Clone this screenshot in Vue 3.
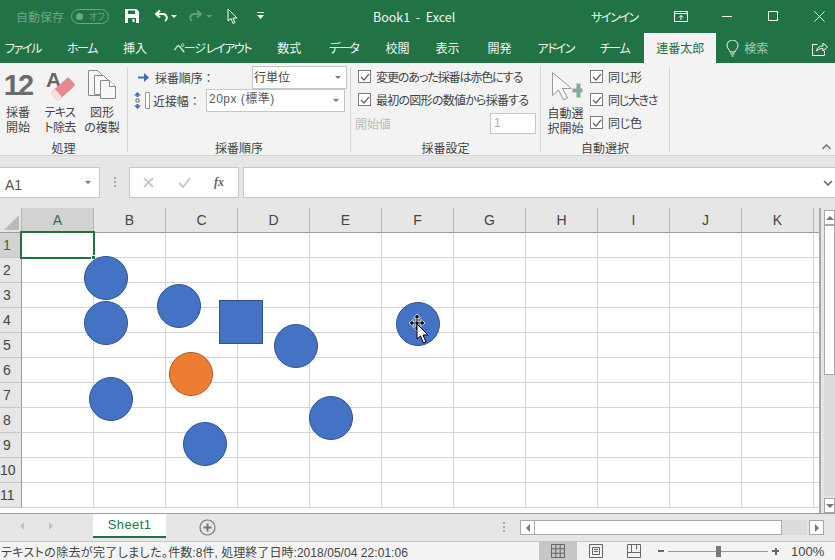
<template>
  <div class="excel">
    <!-- タイトルバー -->
    <header class="titlebar">
      <span class="autosave">自動保存</span>
      <span class="toggle"><i></i><em>オフ</em></span>
      <svg class="qat-save" width="16" height="16" viewBox="0 0 16 16">
        <path d="M1 1h11.500L15 3.500V15H1z" fill="#fff" />
        <path d="M4 2.500h7V6H4zM4 10h8v5H4z" fill="#217346" />
        <path d="M8.500 11h2v3h-2z" fill="#fff" />
      </svg>
      <svg class="qat-undo" width="14" height="14" viewBox="0 0 14 14" fill="none" stroke="#fff" stroke-width="2">
        <path d="M6 1.500 2 5l4 3.500" />
        <path d="M2.500 5H9a3.800 3.800 0 0 1 2 7" />
      </svg>
      <span class="caret qat-c1"></span>
      <svg class="qat-redo" width="14" height="14" viewBox="0 0 14 14" fill="none" stroke="#5f9f80" stroke-width="2">
        <path d="M8 1.500 12 5 8 8.500" />
        <path d="M11.500 5H5a3.800 3.800 0 0 0-2 7" />
      </svg>
      <span class="caret dim qat-c2"></span>
      <svg class="qat-cursor" width="11" height="17" viewBox="0 0 11 17">
        <path d="M1 1v12l3-2.500L6 15.500l2-1-2-4.500h4z" fill="#217346" stroke="#fff" />
      </svg>
      <svg class="qat-more" width="7" height="8" viewBox="0 0 7 8">
        <path d="M0 0h7v1H0zM0 3h7L3.500 7z" fill="#fff" />
      </svg>
      <span class="doc-title">Book1&nbsp; -&nbsp; Excel</span>
      <span class="signin">サインイン</span>
      <svg class="win-display" width="14" height="11" viewBox="0 0 14 11" fill="none" stroke="#fff">
        <path d="M.5.500h13v10H.5zM.5 2.500h13" />
        <path d="M7 9V4.500M5 6.500l2-2 2 2" />
      </svg>
      <span class="win-min"></span>
      <span class="win-max"></span>
      <svg class="win-close" width="11" height="11" viewBox="0 0 11 11" stroke="#fff" fill="none">
        <path d="M.5.500l10 10M10.500.500l-10 10" />
      </svg>
    </header>

    <!-- タブ -->
    <nav class="tabs">
      <span
        v-for="t in tabs"
        :key="t.name"
        class="tab"
        :class="{ active: t.name === '連番太郎', kana: t.kana }"
      >{{ t.name }}</span>
      <svg class="bulb" width="13" height="17" viewBox="0 0 13 17" fill="none" stroke="#fff">
        <path d="M4 12c0-2-3-3.500-3-6.500a5.500 5.500 0 0 1 11 0C12 8.500 9 10 9 12zM4.500 14h4M5.500 16h2" />
      </svg>
      <span class="search">検索</span>
      <svg class="share" width="16" height="15" viewBox="0 0 16 15" fill="none" stroke="#fff">
        <path d="M5.500 3.500H.5v11h12V10" />
        <path d="M4.500 10c.5-3.500 3-5 6.500-5V2l4.500 4-4.500 4V7.500c-2.500 0-5 .5-6.500 2.500z" />
      </svg>
    </nav>

    <!-- リボン -->
    <section class="ribbon">
      <div class="group g-proc">
        <div class="group-body big-row">
          <div class="big-btn b1">
            <span class="num12">12</span>
            <span class="big-label">採番<br />開始</span>
          </div>
          <div class="big-btn b2">
            <svg width="30" height="30" viewBox="0 0 30 30">
              <text x="1" y="17" class="icon-a">A</text>
              <rect x="6" y="13.500" width="24" height="11" rx="2" transform="rotate(-42 18 19)" fill="#e58a8f" />
              <rect x="6" y="13.500" width="6" height="11" rx="1.500" transform="rotate(-42 18 19)" fill="#f6dfe0" />
            </svg>
            <span class="big-label tight">テキス<br />ト除去</span>
          </div>
          <div class="big-btn b3">
            <svg width="30" height="30" viewBox="0 0 30 30" fill="#f8f8f8" stroke="#8a8a8a">
              <path d="M.5.500h9l5 5v20h-14z" />
              <path d="M6.500 5.500h9l5 5v14h-14z" />
              <path d="M12.500 10.500h9l6 6v12h-15z" />
              <path d="M21.500 10.500v6h6" />
            </svg>
            <span class="big-label">図形<br />の複製</span>
          </div>
        </div>
        <div class="group-name">処理</div>
      </div>

      <div class="group g-order">
        <div class="group-body order-body">
          <div class="order-row first">
            <svg class="arrow" width="11" height="9" viewBox="0 0 11 9">
              <path d="M0 3.500h6V0l5 4.500L6 9V5.500H0z" fill="#3f6fb5" />
            </svg>
            <span class="order-label">採番順序：</span>
            <div class="select sel-a">行単位<span class="caret-gray"></span></div>
          </div>
          <div class="order-row">
            <svg class="gap-icon" width="16" height="17" viewBox="0 0 16 17">
              <path d="M3.500 0 0 3.500h2.500V5h2V3.500H7zM3.500 17 7 13.500H4.500V12h-2v1.500H0z" fill="#3f6fb5" />
              <path d="M2 7h3v3H2z" fill="none" stroke="#777" />
              <path d="M11.500.5h4v16h-4z" fill="#fff" stroke="#999" />
            </svg>
            <span class="order-label short">近接幅：</span>
            <div class="select sel-b">20px (標準)<span class="caret-gray"></span></div>
          </div>
        </div>
        <div class="group-name">採番順序</div>
      </div>

      <div class="group g-setting">
        <div class="group-body setting-body">
          <label class="check squeeze"><span class="box"><svg width="10" height="10" viewBox="0 0 10 10"><path d="M1 5l3 3 5-6" fill="none" stroke="#666" stroke-width="1.300" /></svg></span>変更のあった採番は赤色にする</label>
          <label class="check squeeze-b"><span class="box"><svg width="10" height="10" viewBox="0 0 10 10"><path d="M1 5l3 3 5-6" fill="none" stroke="#666" stroke-width="1.300" /></svg></span>最初の図形の数値から採番する</label>
          <div class="start-row">
            <span class="start-label">開始値</span>
            <div class="start-input">1</div>
          </div>
        </div>
        <div class="group-name">採番設定</div>
      </div>

      <div class="group g-auto">
        <div class="group-body auto-body">
          <div class="big-btn auto-btn">
            <svg width="33" height="30" viewBox="0 0 33 30">
              <path d="M2.500 1.500v23l6-5.500 5 10 4-2-5-9.500h9z" fill="#f8f8f8" stroke="#9a9a9a" />
              <path d="M23 17h4v-5h4v5h2v4h-2v5h-4v-5h-4z" transform="translate(-.5 .5)" fill="#83ab95" />
            </svg>
            <span class="big-label">自動選<br />択開始</span>
          </div>
          <div class="auto-checks">
            <label v-for="c in autoChecks" :key="c" class="check"><span class="box"><svg width="10" height="10" viewBox="0 0 10 10"><path d="M1 5l3 3 5-6" fill="none" stroke="#666" stroke-width="1.300" /></svg></span>{{ c }}</label>
          </div>
        </div>
        <div class="group-name">自動選択</div>
      </div>

      <svg class="collapse" width="9" height="6" viewBox="0 0 9 6">
        <path d="M.5 5 4.500 1l4 4" fill="none" stroke="#777" stroke-width="1.600" />
      </svg>
    </section>

    <!-- 数式バー -->
    <div class="formula">
      <div class="namebox"><span class="name-text">A1</span><span class="caret-gray"></span></div>
      <span class="grip"><i></i><i></i><i></i></span>
      <div class="fx-box">
        <svg width="11" height="11" viewBox="0 0 11 11"><path d="M1 1l9 9M10 1l-9 9" stroke="#c8c8c8" stroke-width="1.800" /></svg>
        <svg width="13" height="11" viewBox="0 0 13 11"><path d="M1 6l4 4 7-9" fill="none" stroke="#c8c8c8" stroke-width="2" /></svg>
        <span class="fx">fx</span>
      </div>
      <div class="formula-input"><svg width="10" height="6" viewBox="0 0 10 6"><path d="M1 1l4 4 4-4" fill="none" stroke="#666" stroke-width="1.600" /></svg></div>
    </div>

    <!-- シート -->
    <div class="sheet-area">
      <div class="sheet">
        <div class="corner"><span></span></div>
        <div v-for="c in cols" :key="c" class="col-head" :class="{ sel: c === 'A' }">{{ c }}</div>
        <div class="col-head end"></div>
        <template v-for="r in 11" :key="r">
          <div class="row-head" :class="{ sel: r === 1 }">{{ r }}</div>
          <div v-for="c in cols" :key="c + r" class="cell"></div>
          <div class="cell end"></div>
        </template>
        <div class="selection"><i></i></div>
        <div
          v-for="(s, i) in shapes"
          :key="i"
          class="shape"
          :class="s.kind"
          :style="{ left: s.x - 22 + 'px', top: s.y - 22 + 'px' }"
        ></div>
        <svg class="move-cursor" width="26" height="32" viewBox="0 0 26 32">
          <path d="M9 0l3.500 4H10v4h3V5.500L17 9l-4 3.500V10h-3v3h2.500L9 17l-3.500-4H8v-3H5v2.500L1 9l4-3.500V8h3V4H5.500z" fill="#000" stroke="#fff" stroke-width=".8" />
          <path d="M9 10v15l3.500-3 3 7 2.500-1-3-7h5z" fill="#fff" stroke="#000" />
        </svg>
      </div>
      <div class="vscroll">
        <div class="sb-btn"><span class="tri-up"></span></div>
        <div class="v-thumb"></div>
        <div class="v-track"></div>
        <div class="sb-btn"><span class="tri-down"></span></div>
      </div>
    </div>

    <!-- シートタブ -->
    <div class="sheetbar">
      <div class="nav-arrows"><span class="tri-left pale"></span><span class="tri-right pale"></span></div>
      <div class="sheet-tab">Sheet1</div>
      <svg class="add-sheet" width="17" height="17" viewBox="0 0 17 17" fill="none" stroke="#777">
        <circle cx="8.500" cy="8.500" r="7.500" stroke-width="1.200" />
        <path d="M8.500 4.500v8M4.500 8.500h8" stroke-width="2" />
      </svg>
      <span class="grip bar-grip"><i></i><i></i><i></i></span>
      <div class="hscroll">
        <div class="h-btn"><span class="tri-left"></span></div>
        <div class="h-thumb"></div>
        <div class="h-track"></div>
        <div class="h-btn"><span class="tri-right"></span></div>
      </div>
    </div>

    <!-- ステータスバー -->
    <footer class="status">
      <span class="status-text"><span class="status-lead">テキストの除去が完了しました。</span>件数:8件, 処理終了日時:2018/05/04 22:01:06</span>
      <div class="view active">
        <svg width="14" height="14" viewBox="0 0 14 14" fill="none" stroke="#666"><path d="M.5.500h13v13H.5zM4.800.500v13M9.200.500v13M.5 4.800h13M.5 9.200h13" /></svg>
      </div>
      <div class="view">
        <svg width="14" height="14" viewBox="0 0 14 14" fill="none" stroke="#666"><path d="M.5.500h13v13H.5zM3.500 3.500h7v7h-7zM5 5.500h4M5 7.500h4" /></svg>
      </div>
      <div class="view">
        <svg width="14" height="14" viewBox="0 0 14 14" fill="none" stroke="#666"><path d="M.5.500h13v13H.5zM.5 8.500h13M4.500.500v8M9.500.500v5" /></svg>
      </div>
      <span class="zoom-minus"></span>
      <div class="slider"><i></i></div>
      <span class="zoom-plus"></span>
      <span class="zoom-val">100%</span>
    </footer>
  </div>
</template>

<script setup>
const tabs = [
  { name: 'ファイル', kana: true },
  { name: 'ホーム', kana: true },
  { name: '挿入' },
  { name: 'ページ レイアウト', kana: true },
  { name: '数式' },
  { name: 'データ', kana: true },
  { name: '校閲' },
  { name: '表示' },
  { name: '開発' },
  { name: 'アドイン', kana: true },
  { name: 'チーム', kana: true },
  { name: '連番太郎' },
]
const cols = ['A', 'B', 'C', 'D', 'E', 'F', 'G', 'H', 'I', 'J', 'K']
const autoChecks = ['同じ形', '同じ大きさ', '同じ色']

// 図形の中心座標（シート左上基準）
const shapes = [
  { kind: 'circle', x: 106, y: 70 },
  { kind: 'circle', x: 106, y: 115 },
  { kind: 'circle', x: 179, y: 98 },
  { kind: 'square', x: 241, y: 114 },
  { kind: 'circle', x: 296, y: 138 },
  { kind: 'circle', x: 418, y: 116 },
  { kind: 'circle orange', x: 191, y: 166 },
  { kind: 'circle', x: 111, y: 191 },
  { kind: 'circle', x: 331, y: 210 },
  { kind: 'circle', x: 205, y: 236 },
]
</script>

<style>
html, body { margin: 0; background: #e6e6e6; }
</style>

<style scoped>
.excel {
  width: 835px;
  height: 560px;
  overflow: hidden;
  display: flex;
  flex-direction: column;
  background: #e6e6e6;
  font-family: "Noto Sans CJK JP", "Liberation Sans", sans-serif;
  font-size: 12px;
  font-feature-settings: "palt";
  color: #444;
}

/* タイトルバー */
.titlebar { height: 33px; flex: none; box-sizing: border-box; padding-bottom: 1px; background: #217346; color: #fff; display: flex; align-items: center; }
.autosave { margin-left: 16px; width: 55px; color: #6fa58b; }
.toggle { width: 38px; height: 15px; border: 1px solid #6fa58b; border-radius: 9px; box-sizing: border-box; display: flex; align-items: center; padding-left: 4px; gap: 6px; color: #6fa58b; }
.toggle i { width: 7px; height: 7px; border-radius: 50%; background: #6fa58b; }
.toggle em { font-style: normal; font-size: 9px; }
.qat-save { margin-left: 15px; }
.qat-undo { margin-left: 14px; }
.caret { width: 0; height: 0; border: 3px solid transparent; border-top: 3px solid #fff; border-bottom: 0; margin-left: 3px; }
.caret.dim { border-top-color: #5f9f80; }
.qat-redo { margin-left: 12px; }
.qat-cursor { margin-left: 15px; }
.qat-more { margin-left: 19px; }
.doc-title { margin-left: 109px; width: 218px; font-size: 12.500px; color: #f2f7f4; }
.signin { color: #f2f7f4; width: 83px; letter-spacing: -1.400px; }
.win-min { width: 10px; height: 1px; background: #fff; margin-left: 34px; }
.win-max { width: 10px; height: 10px; border: 1px solid #fff; box-sizing: border-box; margin-left: 36px; }
.win-close { margin-left: 36px; }

/* タブ */
.tabs { height: 30px; flex: none; background: #217346; color: #fff; display: flex; align-items: stretch; }
.tab { padding: 0 13px; line-height: 30px; white-space: nowrap; color: #f2f7f4; }
.tab.kana { letter-spacing: -1.400px; }
.tab:first-child { margin-left: -8px; }
.tab:nth-child(6), .tab:nth-child(9) { margin-left: 2px; }
.tab:nth-child(7) { margin-left: 1px; }
.tab.active { background: #f3f3f3; color: #217346; padding: 0 12px; margin-left: 2px; }
.bulb { align-self: center; margin-left: 10px; }
.search { line-height: 30px; margin-left: 5px; color: #a9cbb9; }
.share { align-self: center; margin-left: 44px; }

/* リボン */
.ribbon { height: 93px; flex: none; background: #f3f3f3; border-bottom: 1px solid #d4d4d4; box-sizing: border-box; display: flex; position: relative; padding-top: 4px; }
.group { display: flex; flex-direction: column; border-right: 1px solid #d4d4d4; box-sizing: border-box; height: 85px; }
.group-body { flex: 1; min-height: 0; }
.group-name { height: 14px; line-height: 19px; text-align: center; color: #444; }
.g-proc { width: 128px; }
.g-order { width: 223px; }
.g-setting { width: 190px; }
.g-auto { width: 129px; }
.big-row { display: flex; }
.big-btn { display: flex; flex-direction: column; align-items: center; }
.b1 { width: 36px; }
.b2 { width: 48px; }
.b3 { width: 36px; }
.num12 { font-family: "Liberation Sans", sans-serif; font-weight: 700; font-size: 29px; line-height: 30px; height: 30px; margin-top: 3px; color: #6b6b6b; letter-spacing: -2px; }
.b2 svg, .b3 svg { margin-top: 3px; flex: none; overflow: visible; }
.b3 svg { margin-left: 2px; }
.icon-a { font-family: "Liberation Sans", sans-serif; font-weight: 700; font-size: 21px; fill: #666; }
.big-label { margin-top: 4px; line-height: 15px; text-align: center; white-space: nowrap; color: #444; }
.big-label.tight { letter-spacing: -0.600px; }
.order-body { padding-left: 6px; }
.order-row { height: 23px; display: flex; align-items: center; }
.order-row.first { margin-top: -1px; }
.arrow { margin-left: 4px; margin-right: 6px; }
.gap-icon { margin-right: 3px; }
.order-label { width: 97px; white-space: nowrap; font-feature-settings: normal; letter-spacing: -0.100px; }
.order-label.short { width: 53px; }
.select { height: 23px; box-sizing: border-box; background: #fff; border: 1px solid #c6c6c6; padding-left: 2px; line-height: 19px; position: relative; font-size: 12px; color: #444; }
.sel-a { width: 95px; padding-left: 1px; }
.sel-b { width: 139px; color: #5b5b5b; font-family: "Liberation Sans", "Noto Sans CJK JP", sans-serif; letter-spacing: 0.500px; }
.caret-gray { width: 0; height: 0; border: 3px solid transparent; border-top: 3px solid #777; border-bottom: 0; }
.select .caret-gray { position: absolute; right: 5px; top: 9px; }
.setting-body { padding-left: 7px; margin-top: -2px; }
.check { display: flex; align-items: center; height: 23px; white-space: nowrap; color: #444; letter-spacing: -0.300px; }
.check.squeeze { letter-spacing: -1.100px; }
.check.squeeze-b { letter-spacing: -0.750px; }
.auto-checks .check:nth-child(2) { letter-spacing: -1.300px; }
.box { width: 13px; height: 13px; box-sizing: border-box; border: 1px solid #7a7a7a; background: #fff; margin-right: 5px; display: flex; align-items: center; justify-content: center; flex: none; }
.start-row { display: flex; align-items: center; height: 23px; padding-top: 2px; box-sizing: border-box; }
.start-label { color: #bbb; width: 135px; margin-left: -3px; }
.start-input { width: 46px; height: 21px; box-sizing: border-box; background: #fff; border: 1px solid #c6c6c6; color: #a8a8a8; padding-left: 3px; line-height: 19px; font-family: "Liberation Sans", sans-serif; }
.auto-body { display: flex; }
.auto-btn { width: 49px; }
.auto-btn svg { margin-top: 4px; margin-left: 2px; flex: none; }
.auto-checks { display: flex; flex-direction: column; margin-top: -2px; }
.collapse { position: absolute; right: 4px; bottom: 5px; }

/* 数式バー */
.formula { height: 52px; flex: none; box-sizing: border-box; padding: 11px 0 10px; display: flex; background: #e6e6e6; }
.namebox { width: 100px; background: #fff; border: 1px solid #c6c6c6; border-left: 0; box-sizing: border-box; display: flex; align-items: center; justify-content: space-between; padding: 0 8px 0 5px; font-family: "Liberation Sans", sans-serif; font-size: 14px; color: #555; }
.name-text { padding-top: 4px; }
.grip { display: flex; flex-direction: column; gap: 2px; }
.grip i { width: 2px; height: 2px; background: #a8a8a8; }
.formula > .grip { margin: 10px 13px 0 14px; }
.fx-box { width: 110px; background: #fff; border: 1px solid #c6c6c6; box-sizing: border-box; display: flex; align-items: center; padding-left: 13px; }
.fx-box svg:nth-child(2) { margin-left: 24px; }
.fx { margin-left: 23px; font-family: "Liberation Serif", serif; font-style: italic; font-weight: 700; font-size: 12px; color: #666; }
.formula-input { flex: 1; margin-left: 4px; background: #fff; border: 1px solid #c6c6c6; border-right: 0; box-sizing: border-box; display: flex; align-items: center; justify-content: flex-end; padding-right: 2px; }

/* シート */
.sheet-area { height: 305px; flex: none; display: flex; background: #e6e6e6; overflow: hidden; }
.sheet {
  width: 821px;
  height: 305px;
  position: relative;
  background: #fff;
  display: grid;
  grid-template-columns: 22px repeat(11, 72px) 5px;
  grid-template-rows: 25px repeat(11, 25px);
  border-right: 2px solid #a8a8a8;
  box-sizing: border-box;
  overflow: hidden;
}
.corner { background: #e6e6e6; border-right: 1px solid #b5b5b5; border-bottom: 1px solid #9c9c9c; box-sizing: border-box; display: flex; align-items: flex-end; justify-content: flex-end; padding: 0 2px 2px 0; }
.corner span { width: 0; height: 0; border-left: 15px solid transparent; border-bottom: 15px solid #b9bdba; }
.col-head { background: #e6e6e6; border-right: 1px solid #b5b5b5; border-bottom: 1px solid #9c9c9c; box-sizing: border-box; text-align: center; line-height: 24px; font-size: 14px; color: #444; font-family: "Liberation Sans", sans-serif; }
.col-head.sel { background: #d2d2d2; color: #217346; }
.col-head.end { border-right: 0; }
.row-head { background: #e6e6e6; border-right: 1px solid #9c9c9c; border-bottom: 1px solid #c6c6c6; box-sizing: border-box; padding-right: 7px; text-align: center; line-height: 24px; font-size: 14px; color: #444; font-family: "Liberation Sans", sans-serif; }
.row-head.sel { background: #d2d2d2; color: #217346; }
.cell { border-right: 1px solid #d4d4d4; border-bottom: 1px solid #d4d4d4; box-sizing: border-box; }
.cell.end { border-right: 0; }
.selection { position: absolute; left: 20px; top: 23px; width: 75px; height: 28px; border: 2px solid #217346; box-sizing: border-box; }
.selection i { position: absolute; right: -3px; bottom: -3px; width: 5px; height: 5px; background: #217346; border: 1px solid #fff; box-sizing: border-box; }
.shape { position: absolute; width: 44px; height: 44px; box-sizing: border-box; background: #4472c4; border: 1px solid #2f528f; }
.circle { border-radius: 50%; }
.orange { background: #ed7d31; border-color: #ae5a21; }
.move-cursor { position: absolute; left: 408px; top: 106px; }
.vscroll { width: 11px; margin-left: 3px; display: flex; flex-direction: column; height: 305px; padding-top: 2px; box-sizing: border-box; }
.sb-btn { height: 15px; flex: none; background: #fff; border: 1px solid #a8a8a8; box-sizing: border-box; display: flex; align-items: center; justify-content: center; }
.v-thumb { height: 150px; flex: none; background: #fff; border: 1px solid #a8a8a8; box-sizing: border-box; }
.v-track { flex: 1; background: #dcdcdc; margin-bottom: 2px; }
.tri-up, .tri-down { width: 0; height: 0; border-left: 4px solid transparent; border-right: 4px solid transparent; }
.tri-up { border-bottom: 4px solid #777; }
.tri-down { border-top: 4px solid #777; }
.tri-left, .tri-right { width: 0; height: 0; border-top: 4px solid transparent; border-bottom: 4px solid transparent; }
.tri-left { border-right: 4px solid #777; }
.tri-right { border-left: 4px solid #777; }
.tri-left.pale { border-right-color: #c2c2c2; }
.tri-right.pale { border-left-color: #c2c2c2; }

/* シートタブ */
.sheetbar { height: 28px; flex: none; box-sizing: border-box; border-top: 1px solid #9c9c9c; background: #e6e6e6; display: flex; align-items: flex-start; }
.nav-arrows { width: 93px; height: 24px; display: flex; align-items: center; gap: 25px; padding-left: 20px; box-sizing: border-box; }
.sheet-tab { width: 73px; height: 24px; box-sizing: border-box; background: #fff; border-bottom: 2px solid #217346; color: #217346; text-align: center; line-height: 21px; font-size: 13px; font-family: "Liberation Sans", sans-serif; letter-spacing: 0.400px; }
.add-sheet { margin: 5px 0 0 33px; }
.bar-grip { margin: 8px 0 0 287px; }
.hscroll { display: flex; margin: 6px 0 0 15px; height: 15px; }
.h-btn { width: 15px; background: #fff; border: 1px solid #a8a8a8; box-sizing: border-box; display: flex; align-items: center; justify-content: center; }
.h-thumb { width: 247px; background: #fff; border: 1px solid #a8a8a8; border-left: 0; box-sizing: border-box; }
.h-track { width: 25px; background: #dcdcdc; margin-right: 2px; }

/* ステータスバー */
.status { flex: 1; background: #f3f3f3; border-top: 1px solid #c6c6c6; box-sizing: border-box; display: flex; align-items: center; white-space: nowrap; }
.status-text { width: 539px; padding-left: 1px; box-sizing: border-box; font-family: "Liberation Sans", "Noto Sans CJK JP", sans-serif; font-size: 12px; letter-spacing: 0.050px; color: #444; overflow: hidden; }
.status-lead { letter-spacing: 0.350px; }
.view { width: 38px; height: 100%; display: flex; align-items: center; justify-content: center; }
.view.active { background: #c6c6c6; }
.zoom-minus { width: 6px; height: 2px; background: #666; margin-left: 5px; }
.slider { width: 100px; height: 1px; background: #999; margin-left: 4px; position: relative; }
.slider i { position: absolute; left: 48px; top: -5px; width: 5px; height: 11px; background: #777; }
.zoom-plus { width: 7px; height: 7px; margin-left: 4px; background: linear-gradient(#666, #666) center / 7px 2px no-repeat, linear-gradient(#666, #666) center / 2px 7px no-repeat; }
.zoom-val { margin-left: 12px; font-size: 13px; font-family: "Liberation Sans", sans-serif; color: #444; }
</style>
